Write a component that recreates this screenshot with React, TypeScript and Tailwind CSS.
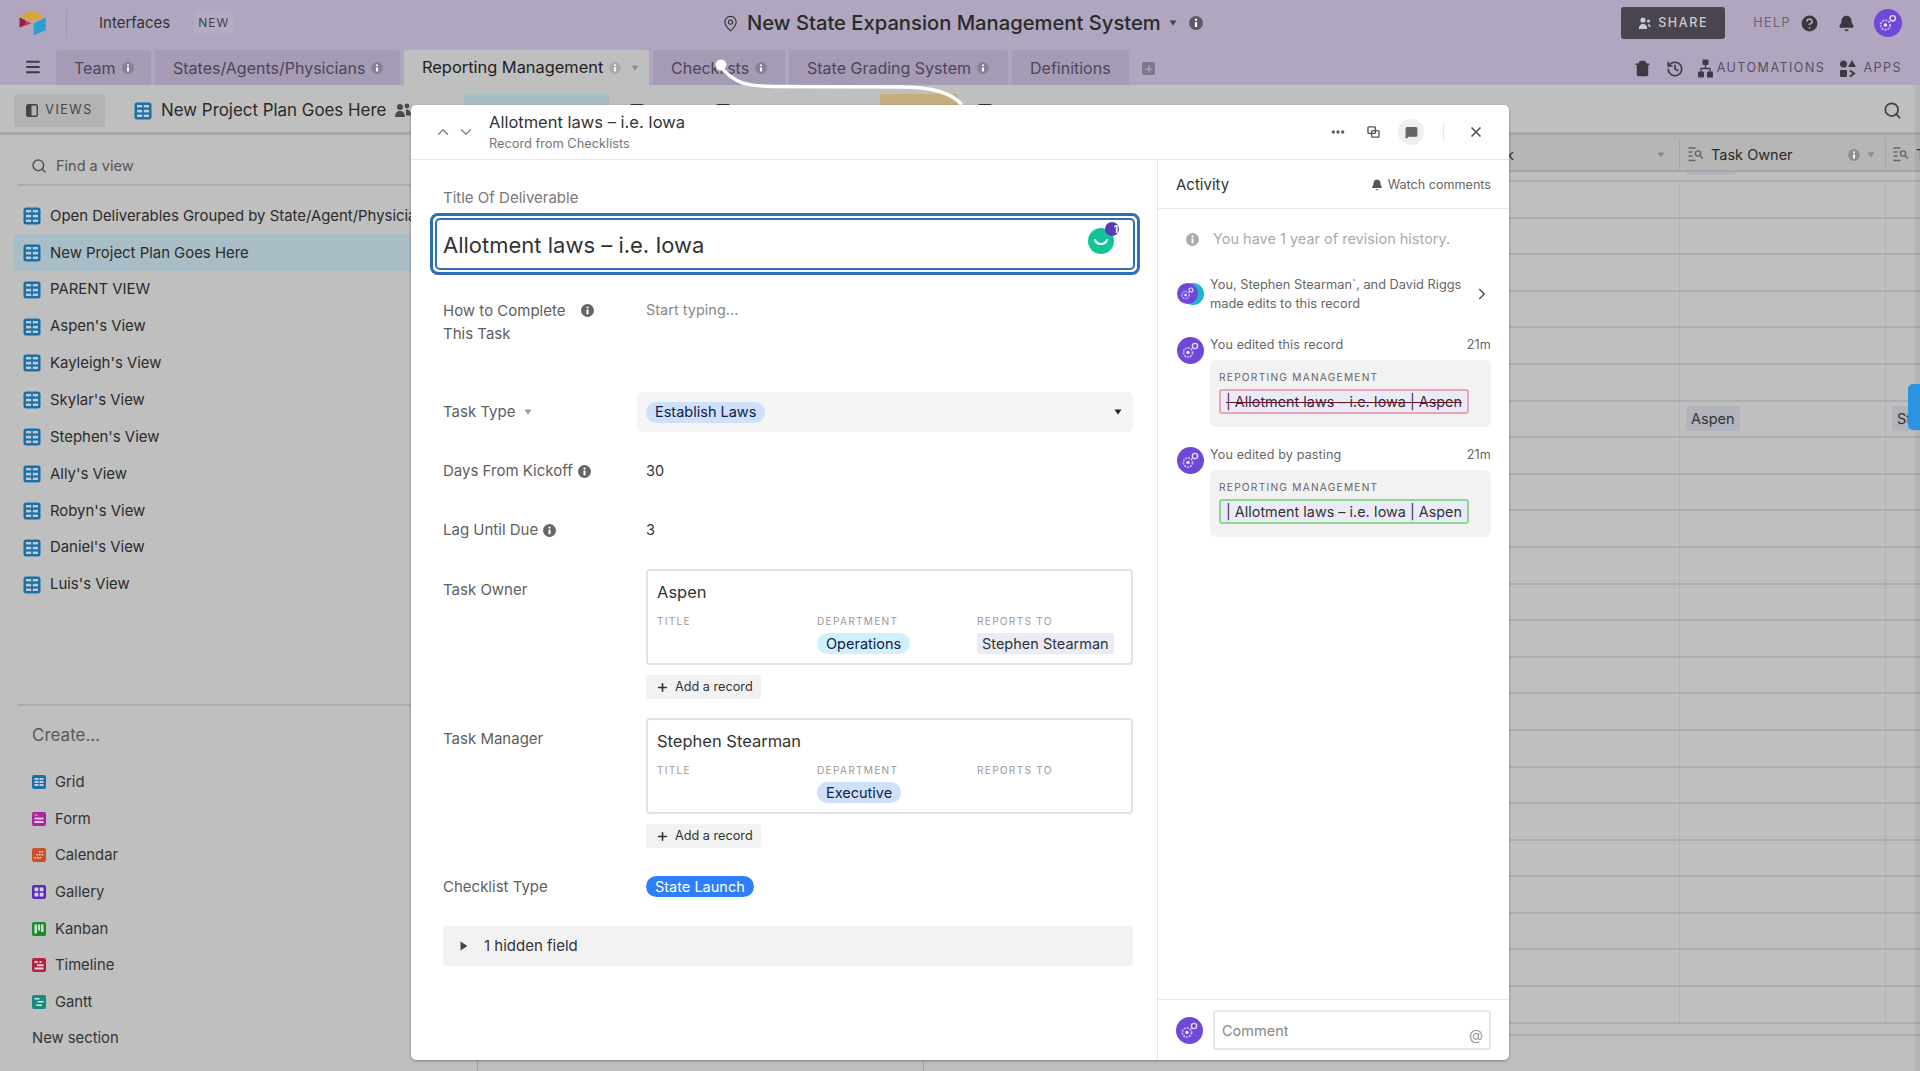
import { Bell, ChevronDown, ChevronRight, ChevronUp, HelpCircle, History, MapPin, Menu, MessageSquare, MoreHorizontal, Plus, Search, Trash2, X } from 'lucide-react';
import type { ReactNode } from 'react';

const FONT = { fontFamily: 'Inter, "Liberation Sans", sans-serif' };

const GridIcon = ({ color = '#1d6fa8', size = 18 }: { color?: string; size?: number }) => (
  <svg width={size} height={size} viewBox="0 0 18 18" className="shrink-0">
    <rect x="0.5" y="0.5" width="17" height="17" rx="2.5" fill={color} />
    <rect x="3" y="3" width="5.2" height="2.4" fill="#c2cdd3" />
    <rect x="9.8" y="3" width="5.2" height="2.4" fill="#c2cdd3" />
    <rect x="3" y="7.8" width="5.2" height="2.6" fill="#c2cdd3" />
    <rect x="9.8" y="7.8" width="5.2" height="2.6" fill="#c2cdd3" />
    <rect x="3" y="12.6" width="5.2" height="2.4" fill="#c2cdd3" />
    <rect x="9.8" y="12.6" width="5.2" height="2.4" fill="#c2cdd3" />
  </svg>
);

const Caret = ({ className = '' }: { className?: string }) => (
  <svg width="8" height="6" viewBox="0 0 8 6" className={className}>
    <path d="M0.5 0.5h7L4 5.5z" fill="currentColor" />
  </svg>
);

const InfoDot = ({ size = 13, color = '#666' }: { size?: number; color?: string }) => (
  <svg width={size} height={size} viewBox="0 0 14 14" className="shrink-0">
    <circle cx="7" cy="7" r="7" fill={color} />
    <circle cx="7" cy="3.8" r="1.2" fill="#fff" />
    <rect x="5.9" y="6" width="2.2" height="5" rx="0.6" fill="#fff" />
  </svg>
);

const Avatar = ({ size = 27 }: { size?: number }) => (
  <svg width={size} height={size} viewBox="0 0 27 27" className="shrink-0">
    <circle cx="13.5" cy="13.5" r="13.5" fill="#6f48d8" />
    <circle cx="11" cy="15.5" r="4.6" fill="none" stroke="#c9b8f2" strokeWidth="1.7" strokeDasharray="2 1" />
    <circle cx="11" cy="15.5" r="1.7" fill="#efe9fd" />
    <circle cx="18" cy="9" r="2.6" fill="none" stroke="#e6ddfa" strokeWidth="1.4" />
  </svg>
);

const Tab = ({ children, active, width }: { children: ReactNode; active?: boolean; width: string }) => (
  <div className={`${width} h-[35px] rounded-t-[3px] flex items-center pl-[18px] gap-[6px] ${active ? 'bg-[#bfbfbf] text-[#222] text-[16.4px]' : 'bg-[#a69bb5] text-[#4b4656] text-[16px]'}`}>
    {children}
  </div>
);

const VIEWS = ['Open Deliverables Grouped by State/Agent/Physician', 'New Project Plan Goes Here', 'PARENT VIEW', "Aspen's View", "Kayleigh's View", "Skylar's View", "Stephen's View", "Ally's View", "Robyn's View", "Daniel's View", "Luis's View"];

const CREATE = [
  { name: 'Grid', color: '#1d6fa8', cells: 'grid' },
  { name: 'Form', color: '#a8279a', cells: 'form' },
  { name: 'Calendar', color: '#c9522c', cells: 'cal' },
  { name: 'Gallery', color: '#5a2bb0', cells: 'gal' },
  { name: 'Kanban', color: '#1f8a2a', cells: 'kan' },
  { name: 'Timeline', color: '#b3233f', cells: 'time' },
  { name: 'Gantt', color: '#178a80', cells: 'gantt' },
];

const CreateIcon = ({ color, cells }: { color: string; cells: string }) => (
  <svg width="14" height="14" viewBox="0 0 14 14" className="shrink-0">
    <rect width="14" height="14" rx="2" fill={color} />
    {cells === 'grid' && <path d="M2.5 3h4v2h-4zM7.5 3h4v2h-4zM2.5 6h4v2h-4zM7.5 6h4v2h-4zM2.5 9h4v2h-4zM7.5 9h4v2h-4z" fill="#c5ccd2" />}
    {cells === 'form' && <path d="M2.5 5.5h9v2h-9zM2.5 9h9v2h-9zM2.5 2.5h3v1h-3z" fill="#e6c8e2" />}
    {cells === 'cal' && <path d="M7 3h1.6v1.6H7zM9.6 3h1.6v1.6H9.6zM4.4 6h1.6v1.6H4.4zM7 6h1.6v1.6H7zM9.6 6h1.6v1.6H9.6zM2.5 9h1.6v1.6H2.5zM5 9h1.6v1.6H5zM7.5 9h1.6v1.6H7.5z" fill="#eed2c6" />}
    {cells === 'gal' && <path d="M2.5 2.5h3.8v3.8H2.5zM7.7 2.5h3.8v3.8H7.7zM2.5 7.7h3.8v3.8H2.5zM7.7 7.7h3.8v3.8H7.7z" fill="#d9cdef" />}
    {cells === 'kan' && <path d="M2.5 2.5h2.4v9H2.5zM5.9 2.5h2.2v6H5.9zM9.1 2.5h2.4v7.5H9.1z" fill="#cfe6d1" />}
    {cells === 'time' && <path d="M2.5 3h3v2h-3zM7.5 3h2v2h-2zM5 6.2h6.5v2H5zM2.5 9.4h9v2h-9z" fill="#efd0d6" />}
    {cells === 'gantt' && <path d="M2.5 3h5v1.5h-5zM5.5 6h6v1.5h-6zM4 9.5h6V11H4z" fill="#cdeae7" />}
  </svg>
);

const LookupIcon = () => (
  <svg width="16" height="17" viewBox="0 0 16 17" className="shrink-0" fill="none" stroke="#666" strokeWidth="1.4">
    <path d="M0.5 2h7M0.5 6h4M0.5 10h4M0.5 14.5h7" />
    <circle cx="10" cy="7.5" r="2.6" />
    <path d="M12 9.6l2.8 2.8" />
  </svg>
);

const Label = ({ children }: { children: ReactNode }) => (
  <div className="w-[203px] shrink-0 text-[15px] text-[#5e5e5e] flex items-center gap-[5px] leading-[22px]">{children}</div>
);

const Cap = ({ children }: { children: ReactNode }) => (
  <div className="text-[10.2px] tracking-[0.12em] text-[#9a9a9a] leading-[14px]">{children}</div>
);

const Pill = ({ children, bg }: { children: ReactNode; bg: string }) => (
  <span className={`${bg} inline-flex items-center h-[21px] rounded-full px-[9px] text-[14.5px] text-[#102046] whitespace-nowrap`}>{children}</span>
);

const AddRecord = () => (
  <div className="mt-[10px] w-[115px] h-[24px] rounded-[2px] bg-[#f2f2f2] flex items-center gap-[6px] pl-[10px] text-[12.7px] text-[#333]">
    <Plus size={13} strokeWidth={3} />
    Add a record
  </div>
);

const LinkedCard = ({ name, dept, reports }: { name: string; dept: ReactNode; reports?: ReactNode }) => (
  <div className="h-[96px] rounded-[4px] border-2 border-[#e2e2e2] bg-white pl-[9px] pt-[10px]">
    <div className="text-[16.5px] leading-[22px] text-[#333]">{name}</div>
    <div className="grid grid-cols-[160px_160px_1fr] mt-[11px]">
      <Cap>TITLE</Cap>
      <div><Cap>DEPARTMENT</Cap><div className="mt-[3px]">{dept}</div></div>
      <div><Cap>REPORTS TO</Cap><div className="mt-[3px]">{reports}</div></div>
    </div>
  </div>
);

const Edit = ({ title, removed, top }: { title: string; removed?: boolean; top: string }) => (
  <div className={`flex gap-[6px] pl-[19px] pr-[18px] ${top}`}>
    <div className="mt-[1px]"><Avatar /></div>
    <div className="flex-1">
      <div className="flex justify-between h-[24px] text-[12.6px] leading-[18px] text-[#666] tracking-[0.01em]"><span>{title}</span><span>21m</span></div>
      <div className="h-[67px] rounded-[6px] bg-[#f2f2f2] px-[9px] pt-[10px]">
        <div className="text-[10.2px] tracking-[0.12em] text-[#666] leading-[14px]">REPORTING MANAGEMENT</div>
        <div className={`mt-[5px] w-[250px] h-[25px] rounded-[3px] border-2 bg-[#e9ecf8] flex items-center justify-center text-[14.4px] whitespace-nowrap ${removed ? 'border-[#eba3b9] text-[#5a1a2e] line-through' : 'border-[#8fd68f] text-[#333]'}`}>
          | Allotment laws – i.e. Iowa | Aspen
        </div>
      </div>
    </div>
  </div>
);

const ToolItem = ({ width }: { width: string }) => (
  <div className={`${width} shrink-0 flex items-center`}>
    <span className="w-[14px] h-[14px] rounded-[2px] border-2 border-[#333]" />
  </div>
);

export default function App() {
  return (
    <div style={FONT} className="relative w-[1920px] h-[1071px] overflow-hidden bg-[#bfbfbf] text-[#333]">
      {/* top bar */}
      <div className="h-[85px] bg-[#b0a6bf]">
        <div className="h-[50px] pb-[4px] flex items-center relative">
          <svg width="30" height="27" viewBox="0 0 90 80" className="ml-[18px]">
            <path d="M40 0l40 18-37 17L5 18z" fill="#d8a23c" />
            <path d="M47 40l36-18v38L47 75z" fill="#2a9fd0" />
            <path d="M5 22l35 18L5 52z" fill="#d8304e" />
            <path d="M5 22l16 8v12L5 52z" fill="#8c2347" />
          </svg>
          <div className="ml-[18px] w-px h-[26px] bg-[#a297b1]" />
          <span className="ml-[32px] text-[15px] text-[#333]">Interfaces</span>
          <span className="ml-[24px] -mt-[1px] text-[12px] tracking-[0.08em] text-[#444] bg-[#b5acc3] px-[4px] py-[3px] rounded-[3px]">NEW</span>
          <div className="absolute left-[722px] top-[8px] flex items-center">
            <MapPin size={17} strokeWidth={1.6} className="text-[#333]" />
            <span className="ml-[8px] text-[20.2px] font-medium text-[#2a2a2a] whitespace-nowrap">New State Expansion Management System</span>
            <Caret className="ml-[8px] text-[#444]" />
            <span className="ml-[12px]"><InfoDot size={14} color="#5f5868" /></span>
          </div>
          <div className="ml-auto flex items-center">
            <div className="w-[104px] h-[32px] rounded-[3px] bg-[#49454f] text-[#ccc8d4] flex items-center justify-center gap-[7px] text-[12.5px] tracking-[0.13em] font-medium">
              <svg width="13" height="13" viewBox="0 0 13 13" fill="currentColor"><circle cx="5" cy="3" r="2.6" /><path d="M0.8 12c0-3.5 1.6-5 4.2-5s4.2 1.5 4.2 5z" /><circle cx="10.5" cy="4" r="1.6" /><path d="M10 7c1.6 0 2.5 1 2.5 3h-1.8c0-1-.2-2-.7-3z" /></svg>
              SHARE
            </div>
            <span className="ml-[28px] text-[12.5px] tracking-[0.12em] text-[#6a6373]">HELP</span>
            <HelpCircle size={21} fill="#3a3640" stroke="#b0a6bf" strokeWidth={2} className="ml-[8px]" />
            <Bell size={17} fill="#3a3640" stroke="#3a3640" className="ml-[18px]" />
            <div className="ml-[19px] mr-[18px] rounded-full"><Avatar size={28} /></div>
          </div>
        </div>
        <div className="h-[35px] flex items-end relative">
          <Menu size={18} strokeWidth={2.4} className="text-[#3d3a44] ml-[24px] mb-[9px] mr-[14px]" />
          <div className="flex gap-[4px]">
            <Tab width="w-[95px]">Team<InfoDot size={12} color="#8a8096" /></Tab>
            <Tab width="w-[245px]">States/Agents/Physicians<InfoDot size={12} color="#8a8096" /></Tab>
            <Tab width="w-[245px]" active>Reporting Management<InfoDot size={12} color="#a9a9a9" /><Caret className="ml-[4px] text-[#8a8a8a]" /></Tab>
            <Tab width="w-[132px]">Checklists<InfoDot size={12} color="#8a8096" /></Tab>
            <Tab width="w-[219px]">State Grading System<InfoDot size={12} color="#8a8096" /></Tab>
            <Tab width="w-[117px]">Definitions</Tab>
          </div>
          <div className="ml-[13px] mb-[10px] w-[13px] h-[13px] rounded-[2px] bg-[#7f758d] flex items-center justify-center">
            <Plus size={10} strokeWidth={3} className="text-[#b0a6bf]" />
          </div>
          <div className="absolute right-[18px] top-[1px] h-[35px] flex items-center text-[#3d3a44]">
            <Trash2 size={17} strokeWidth={2.2} fill="#3d3a44" className="mr-[15px]" />
            <History size={18} strokeWidth={2.2} className="mr-[14px]" />
            <svg width="15" height="19" viewBox="0 0 15 19" fill="#3d3a44" className="mr-[4px]"><rect x="4.5" y="0.5" width="6" height="5.5" rx="1" /><rect x="0" y="12.5" width="6" height="6" rx="1" /><rect x="9" y="12.5" width="6" height="6" rx="1" /><path d="M7.5 6v3.5M3 12.5V9.5h9v3" fill="none" stroke="#3d3a44" strokeWidth="1.3" /></svg>
            <span className="text-[12.5px] tracking-[0.12em] text-[#57505f]">AUTOMATIONS</span>
            <svg width="16" height="18" viewBox="0 0 16 18" fill="#3d3a44" className="ml-[15px] mr-[7px]"><circle cx="3.5" cy="4" r="3.5" /><path d="M12 0l4 7H8z" /><rect y="10" width="7" height="7" rx="1" /><path d="M10 10.5l4 3-4 3" fill="none" stroke="#3d3a44" strokeWidth="2" /></svg>
            <span className="text-[12.5px] tracking-[0.12em] text-[#57505f]">APPS</span>
          </div>
        </div>
      </div>

      {/* toolbar */}
      <div className="h-[50px] pt-[4px] flex items-center border-b-[3px] border-[#a8a8a8]">
        <div className="w-[464px] shrink-0 flex items-center overflow-hidden">
          <div className="ml-[14px] w-[91px] h-[33px] rounded-[3px] bg-[#b3b3b3] flex items-center justify-center gap-[7px] text-[12.5px] tracking-[0.12em] text-[#444]">
            <svg width="12" height="13" viewBox="0 0 12 13"><rect x="0.7" y="0.7" width="10.6" height="11.6" rx="1.5" fill="none" stroke="#444" strokeWidth="1.4" /><rect x="1" y="1" width="4.5" height="11" fill="#444" /></svg>
            VIEWS
          </div>
          <div className="ml-[29px]"><GridIcon /></div>
          <span className="ml-[9px] text-[16.9px] text-[#2a2a2a] whitespace-nowrap">New Project Plan Goes Here</span>
          <svg width="17" height="15" viewBox="0 0 17 15" fill="#4a4a4a" className="ml-[9px] shrink-0"><circle cx="5" cy="4" r="3" /><circle cx="12" cy="3" r="2.4" /><path d="M0 14c0-4 2-6 5-6s5 2 5 6zM11 6.5c3 0 5 2 5 6h-5z" /></svg>
        </div>
        <div className="w-[145px] h-[33px] shrink-0 rounded-[3px] bg-[#a8bcc6]" />
        <div className="w-[21px] shrink-0" />
        <ToolItem width="w-[86px]" />
        <ToolItem width="w-[164px]" />
        <div className="w-[78px] h-[33px] shrink-0 rounded-[3px] bg-[#c7ad7d]" />
        <div className="w-[20px] shrink-0" />
        <ToolItem width="w-[120px]" />
        <Search size={19} strokeWidth={2.2} className="ml-auto mr-[18px] text-[#444]" />
      </div>

      {/* body behind the record */}
      <div className="flex h-[936px]">
        <aside className="w-[478px] shrink-0 border-r border-[#a3a3a3] overflow-hidden">
          <div className="mx-[18px] h-[51px] pt-[12px] flex items-center gap-[9px] pl-[13px] border-b-[2px] border-[#acacac] text-[14.5px] text-[#555]">
            <Search size={16} strokeWidth={2.2} />
            Find a view
          </div>
          <div className="mt-[11.5px]">
            {VIEWS.map((v, i) => (
              <div key={v} className={`h-[36.86px] ml-[14px] pl-[9px] flex items-center gap-[9px] text-[14.9px] text-[#2b2b2b] whitespace-nowrap rounded-[3px] ${i === 1 ? 'bg-[#a9bdc7]' : ''}`}>
                <GridIcon />
                {v}
              </div>
            ))}
          </div>
          <div className="mx-[18px] mt-[101px] border-t-[2px] border-[#acacac]" />
          <div className="ml-[32px] mt-[17px] text-[17px] leading-[24px] text-[#5a5a5a]">Create...</div>
          <div className="mt-[17px]">
            {CREATE.map(c => (
              <div key={c.name} className="h-[36.6px] ml-[32px] flex items-center gap-[9px] text-[14.8px] text-[#333]">
                <CreateIcon color={c.color} cells={c.cells} />
                {c.name}
              </div>
            ))}
            <div className="h-[36.6px] ml-[32px] flex items-center text-[14.8px] text-[#333]">New section</div>
          </div>
        </aside>

        <div className="w-[446px] shrink-0 border-r border-[#a3a3a3]" />

        <main className="flex-1">
          <div className="h-[37px] pt-[4px] flex items-center bg-[#b6b6b6] border-b-[2px] border-[#a6a6a6]">
            <div className="w-[756px] h-full border-r border-[#a6a6a6] flex items-center justify-end pr-[157px] text-[14.5px]">
              How to Complete This Task
              <Caret className="ml-[143px] -mr-[143px] text-[#8a8a8a]" />
            </div>
            <div className="w-[206px] h-full border-r border-[#a6a6a6] flex items-center pl-[8px] text-[14.5px] text-[#2b2b2b]">
              <LookupIcon />
              <span className="ml-[7px]">Task Owner</span>
              <span className="ml-auto"><InfoDot size={12} color="#8f8f8f" /></span>
              <Caret className="ml-[7px] mr-[10px] text-[#8a8a8a]" />
            </div>
            <div className="flex items-center pl-[7px] text-[14.5px] whitespace-nowrap"><LookupIcon /><span className="ml-[7px]">Task Manager</span></div>
          </div>
          <div className="h-[10px] flex border-b-[2px] border-[#b0b0b0]">
            <div className="w-[762px] shrink-0" />
            <div className="w-[50px] h-[3px] rounded-b-[3px] bg-[#b2b4bd]" />
          </div>
          {Array.from({ length: 23 }, (_, i) => (
            <div key={i} className="h-[36.6px] flex border-b-[2px] border-[#adadad]">
              <div className="w-[756px] border-r border-[#b3b3b3]" />
              <div className="w-[206px] border-r border-[#b3b3b3] pl-[6px] flex items-center">
                {i === 6 && <span className="h-[25px] px-[5px] rounded-[3px] bg-[#b2b4bd] text-[14.5px] leading-[25px] text-[#333]">Aspen</span>}
              </div>
              <div className="pl-[6px] flex items-center whitespace-nowrap">
                {i === 6 && <span className="h-[25px] px-[5px] rounded-[3px] bg-[#b2b4bd] text-[14.5px] leading-[25px] text-[#333]">Stephen</span>}
              </div>
            </div>
          ))}
          <div className="h-[12px] border-b-[2px] border-[#adadad]" />
        </main>
      </div>

      {/* scroll shade and blue chat tab at the screen edge */}
      <div className="absolute right-0 top-[85px] bottom-0 w-[5px] bg-black/5" />
      <div className="absolute left-[1908px] top-[384px] w-[20px] h-[46px] rounded-[5px] bg-[#2a94e0]" />

      {/* pointer annotation */}
      <svg width="260" height="60" viewBox="0 0 260 60" className="absolute left-[712px] top-[55px]" fill="none">
        <circle cx="9" cy="10" r="5.5" fill="#fff" />
        <path d="M9 12C22 28 34 31 62 31.5L190 32C222 32 240 38 250 50" stroke="#fff" strokeWidth="3.4" />
      </svg>

      {/* record modal */}
      <div className="absolute left-[411px] top-[105px] w-[1098px] h-[955px] rounded-[5px] bg-white shadow-[0_1px_3px_rgba(0,0,0,0.35)] flex flex-col overflow-hidden">
        <header className="h-[55px] shrink-0 border-b border-[#e6e6e6] flex items-center">
          <ChevronUp size={18} className="ml-[23px] text-[#888]" />
          <ChevronDown size={18} className="ml-[5px] text-[#888]" />
          <div className="ml-[14px] -mt-[1px]">
            <div className="text-[16.5px] leading-[22px] text-[#333]">Allotment laws – i.e. Iowa</div>
            <div className="text-[12.8px] leading-[18px] text-[#777] mt-[2px]">Record from Checklists</div>
          </div>
          <div className="ml-auto flex items-center text-[#555]">
            <MoreHorizontal size={16} strokeWidth={3} />
            <svg width="13" height="12" viewBox="0 0 14 13" fill="none" stroke="#555" strokeWidth="1.5" className="ml-[21px]"><rect x="1" y="1" width="8" height="7" rx="1" /><rect x="5" y="5" width="8" height="7" rx="1" /></svg>
            <div className="ml-[18px] w-[26px] h-[26px] rounded-full bg-[#efefef] flex items-center justify-center"><MessageSquare size={13} fill="#666" stroke="#666" /></div>
            <div className="ml-[19px] w-px h-[18px] bg-[#e6e6e6]" />
            <X size={16} strokeWidth={2.6} className="ml-[24px] mr-[25px]" />
          </div>
        </header>

        <div className="flex-1 flex min-h-0">
          <section className="w-[746px] shrink-0 pl-[32px] pr-[24px] pt-[27px]">
            <div className="text-[15px] leading-[22px] text-[#777]">Title Of Deliverable</div>
            <div className="-ml-[13px] -mr-[7px] mt-[4px] h-[62px] rounded-[8px] border-[3px] border-[#2f6fb5] p-[2px]">
              <div className="relative h-full rounded-[5px] border-[2px] border-[#2f6fb5] flex items-center pl-[6px] pt-[2px] text-[22px] text-[#333]">
                Allotment laws – i.e. Iowa
                <svg width="36" height="36" viewBox="0 0 36 36" className="absolute right-[11px] top-[0px]">
                  <circle cx="15" cy="21" r="13" fill="#15c39a" />
                  <path d="M9 20a6.5 6.5 0 0 0 12 0" fill="none" stroke="#fff" strokeWidth="2" strokeLinecap="round" />
                  <circle cx="26" cy="9" r="7" fill="#5a3ab8" />
                </svg>
                <span className="absolute right-[15px] top-[3px] text-[10px] leading-[12px] font-bold text-white">1</span>
              </div>
            </div>

            <div className="flex mt-[24px] h-[68px]">
              <div className="w-[203px] shrink-0 text-[15px] leading-[23px] text-[#5e5e5e]">
                <div className="flex items-center">How to Complete <span className="ml-[15px]"><InfoDot size={13} /></span></div>
                <div>This Task</div>
              </div>
              <div className="-mt-[1px] text-[14.5px] leading-[23px] text-[#888]">Start typing...</div>
            </div>
            <div className="flex items-center mt-[25px] h-[40px]">
              <Label>Task Type <Caret className="ml-[4px] text-[#999]" /></Label>
              <div className="-ml-[9px] flex-1 h-full rounded-[5px] bg-[#f5f5f5] flex items-center pl-[9px] pr-[11px]">
                <Pill bg="bg-[#cfe0fc]">Establish Laws</Pill>
                <Caret className="ml-auto text-[#222]" />
              </div>
            </div>
            <div className="flex items-center mt-[28px] h-[22px]">
              <Label>Days From Kickoff <InfoDot /></Label>
              <span className="text-[14.5px] text-[#333]">30</span>
            </div>
            <div className="flex items-center mt-[37px] h-[22px]">
              <Label>Lag Until Due <InfoDot /></Label>
              <span className="text-[14.5px] text-[#333]">3</span>
            </div>
            <div className="flex mt-[28px]">
              <div className="w-[203px] shrink-0 pt-[10px] text-[15px] leading-[22px] text-[#5e5e5e]">Task Owner</div>
              <div className="flex-1">
                <LinkedCard
                  name="Aspen"
                  dept={<Pill bg="bg-[#d0f0fd]">Operations</Pill>}
                  reports={<span className="inline-flex items-center h-[21px] px-[5px] rounded-[2px] bg-[#e9ecf8] text-[14.5px] text-[#333] whitespace-nowrap">Stephen Stearman</span>}
                />
                <AddRecord />
              </div>
            </div>
            <div className="flex mt-[19px]">
              <div className="w-[203px] shrink-0 pt-[10px] text-[15px] leading-[22px] text-[#5e5e5e]">Task Manager</div>
              <div className="flex-1">
                <LinkedCard name="Stephen Stearman" dept={<Pill bg="bg-[#cfe0fc]">Executive</Pill>} />
                <AddRecord />
              </div>
            </div>
            <div className="flex items-center mt-[28px] h-[21px]">
              <Label>Checklist Type</Label>
              <span className="inline-flex items-center h-[21px] rounded-full px-[9px] bg-[#2d7ff9] text-white text-[14.5px]">State Launch</span>
            </div>
            <div className="mt-[29px] h-[40px] rounded-[3px] bg-[#f2f2f2] flex items-center pl-[17px] gap-[16px] text-[15px] text-[#333]">
              <svg width="8" height="10" viewBox="0 0 8 10"><path d="M0.5 0.5v9L7.5 5z" fill="#444" /></svg>
              1 hidden field
            </div>
          </section>

          <section className="flex-1 border-l border-[#e6e6e6] flex flex-col">
            <div className="h-[49px] shrink-0 pt-[2px] border-b border-[#e6e6e6] flex items-center pl-[18px] pr-[18px]">
              <span className="text-[15px] text-[#333]">Activity</span>
              <Bell size={12} fill="#555" stroke="#555" className="ml-auto" />
              <span className="ml-[5px] text-[12.6px] text-[#666]">Watch comments</span>
            </div>
            <div className="flex items-center pl-[28px] mt-[21px] h-[18px]">
              <InfoDot size={13} color="#aaa" />
              <span className="ml-[14px] text-[14.5px] text-[#aaa] whitespace-nowrap">You have 1 year of revision history.</span>
            </div>
            <div className="flex items-center pl-[19px] pr-[18px] mt-[27px]">
              <div className="relative w-[27px] h-[22px] shrink-0">
                <div className="absolute left-[5px] top-0 w-[22px] h-[22px] rounded-full bg-[#19b8c6]" />
                <div className="absolute left-0 top-0"><Avatar size={21} /></div>
              </div>
              <div className="ml-[6px] text-[12.8px] leading-[19px] text-[#666] whitespace-nowrap">You, Stephen Stearman`, and David Riggs<br />made edits to this record</div>
              <ChevronRight size={18} strokeWidth={2.2} className="ml-auto text-[#555]" />
            </div>
            <Edit top="mt-[23px]" title="You edited this record" removed />
            <Edit top="mt-[19px]" title="You edited by pasting" />
            <div className="mt-auto h-[61px] shrink-0 border-t border-[#e6e6e6] flex items-center pl-[18px] pr-[18px] gap-[10px]">
              <Avatar />
              <div className="flex-1 h-[40px] rounded-[3px] border-2 border-[#e6e6e6] flex pl-[7px] pr-[6px] pt-[8px] text-[14.5px] text-[#888] justify-between">
                Comment
                <span className="mt-[4px] text-[#999]">@</span>
              </div>
            </div>
          </section>
        </div>
      </div>
    </div>
  );
}
